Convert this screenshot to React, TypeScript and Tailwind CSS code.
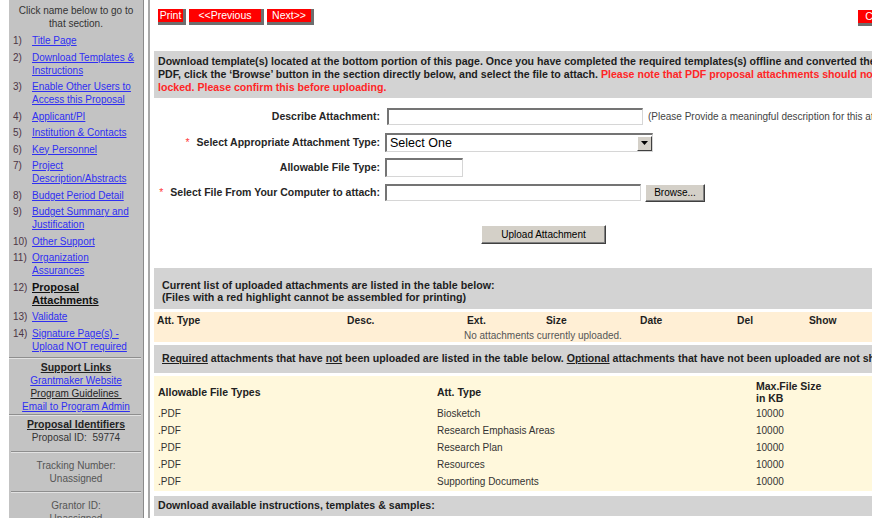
import React from 'react';

const navItems: { n: string; lines: string[]; active?: boolean }[] = [
  { n: '1)', lines: ['Title Page'] },
  { n: '2)', lines: ['Download Templates &', 'Instructions'] },
  { n: '3)', lines: ['Enable Other Users to', 'Access this Proposal'] },
  { n: '4)', lines: ['Applicant/PI'] },
  { n: '5)', lines: ['Institution & Contacts'] },
  { n: '6)', lines: ['Key Personnel'] },
  { n: '7)', lines: ['Project', 'Description/Abstracts'] },
  { n: '8)', lines: ['Budget Period Detail'] },
  { n: '9)', lines: ['Budget Summary and', 'Justification'] },
  { n: '10)', lines: ['Other Support'] },
  { n: '11)', lines: ['Organization', 'Assurances'] },
  { n: '12)', lines: ['Proposal', 'Attachments'], active: true },
  { n: '13)', lines: ['Validate'] },
  { n: '14)', lines: ['Signature Page(s) -', 'Upload NOT required'] },
];

const required = [
  { ext: '.PDF', type: 'Biosketch', size: '10000' },
  { ext: '.PDF', type: 'Research Emphasis Areas', size: '10000' },
  { ext: '.PDF', type: 'Research Plan', size: '10000' },
  { ext: '.PDF', type: 'Resources', size: '10000' },
  { ext: '.PDF', type: 'Supporting Documents', size: '10000' },
];

function RedButton({ children, className = '' }: { children: React.ReactNode; className?: string }) {
  return (
    <button
      className={`h-[16px] bg-[#ff0000] text-white text-[10.5px] leading-[13px] border-r-[3px] border-b-[3px] border-r-[#6e6e6e] border-b-[#6e6e6e] ${className}`}
    >
      {children}
    </button>
  );
}

function GrayButton({ children, className = '' }: { children: React.ReactNode; className?: string }) {
  return (
    <button
      className={`bg-[#d4d0c8] text-[10px] text-black border border-t-white border-l-white border-r-[#404040] border-b-[#404040] shadow-[inset_-1px_-1px_0_#808080] ${className}`}
    >
      {children}
    </button>
  );
}

const inset =
  'bg-white border-t-2 border-l-2 border-b border-r border-t-[#747474] border-l-[#747474] border-b-[#d6d6d6] border-r-[#d6d6d6]';

function Sep({ inner = false, className = '' }: { inner?: boolean; className?: string }) {
  return (
    <div
      className={`border-t border-b border-t-[#8e8e8e] border-b-[#e2e2e2] ${inner ? 'mx-[2px]' : 'mr-[2px]'} ${className}`}
    />
  );
}

function Sidebar() {
  return (
    <aside className="w-[135px] shrink-0 bg-[#c3c3c3] border-r border-[#8a8a8a] text-[10px] leading-[13px] text-[#333]">
      <div className="mt-[4px] text-center">
        Click name below to go to
        <br />
        that section.
      </div>

      <ul className="mt-[4px] flex flex-col gap-[3.5px] pl-[4px]">
        {navItems.map((item) => (
          <li key={item.n} className="flex">
            <span className="w-[19px] shrink-0 text-[#4d3545]">{item.n}</span>
            <a
              className={
                item.active
                  ? 'font-bold text-[11px] text-[#111] underline'
                  : 'text-[#2f2ff2] underline'
              }
            >
              {item.lines.map((l, i) => (
                <span key={i} className="block">
                  {l}
                </span>
              ))}
            </a>
          </li>
        ))}
      </ul>

      <Sep className="mt-[4px]" />
      <div className="mt-[2px] text-center">
        <div className="font-bold text-[10.5px] text-[#222] underline">Support Links</div>
        <a className="block text-[#2f2ff2] underline">Grantmaker Website</a>
        <a className="block text-[#222] underline">Program Guidelines&nbsp;</a>
        <a className="block text-[#2f2ff2] underline">Email to Program Admin</a>
      </div>

      <Sep className="mt-[1px]" />
      <div className="mt-[2px] text-center">
        <div className="font-bold text-[10.5px] text-[#222] underline">Proposal Identifiers</div>
        <div>Proposal ID:&nbsp; 59774</div>
        <Sep inner className="mt-[7px]" />
        <div className="mt-[6px] text-[#555]">
          Tracking Number:
          <br />
          Unassigned
        </div>
        <Sep inner className="mt-[6px]" />
        <div className="mt-[6px] text-[#555]">
          Grantor ID:
          <br />
          Unassigned
        </div>
      </div>
    </aside>
  );
}

export default function App() {
  return (
    <div className="h-[518px] w-[872px] overflow-hidden bg-white flex font-['Liberation_Sans',Arial,sans-serif]">
      <div className="w-[9px] shrink-0" />
      <Sidebar />
      <div className="w-[4px] shrink-0" />
      <div className="w-[2px] shrink-0 bg-[#a9a9a9]" />

      <main className="w-[1000px] shrink-0 pl-[4px]">
        {/* nav buttons */}
        <div className="mt-[9px] flex items-start gap-[3px] pl-[4px]">
          <RedButton className="w-[28px]">Print</RedButton>
          <RedButton className="w-[75px]">&lt;&lt;Previous</RedButton>
          <RedButton className="w-[47px]">Next&gt;&gt;</RedButton>
          <RedButton className="ml-[541px] mt-[1px] w-[50px]">Cancel</RedButton>
        </div>

        {/* instructions */}
        <div className="mt-[25px] bg-[#d3d3d3] py-[4px] pl-[4px] text-[10.6px] font-bold leading-[13px] text-[#1e1e1e] whitespace-nowrap">
          <div>
            Download template(s) located at the bottom portion of this page. Once you have completed the required
            templates(s) offline and converted them to
          </div>
          <div>
            PDF, click the ‘Browse’ button in the section directly below, and select the file to attach.{' '}
            <span className="text-[#ff2626]">
              Please note that PDF proposal attachments should not be password protected or
            </span>
          </div>
          <div className="text-[#ff2626]">locked. Please confirm this before uploading.</div>
        </div>

        {/* attachment form */}
        <div className="mt-[9px] text-[10.5px] font-bold text-[#262626]">
          <div className="flex items-center h-[19px]">
            <label className="w-[227px] text-right pr-[1px]">Describe Attachment:</label>
            <input className={`ml-[6px] h-[17px] w-[256px] ${inset}`} />
            <span className="ml-[5px] font-normal text-[10px] text-[#444] whitespace-nowrap">
              (Please Provide a meaningful description for this attachment)
            </span>
          </div>

          <div className="mt-[7px] flex items-center h-[19px]">
            <label className="w-[227px] text-right pr-[1px] whitespace-nowrap">
              <span className="text-[#ff3b3b] font-normal mr-[7px]">*</span>
              Select Appropriate Attachment Type:
            </label>
            <div className={`ml-[4px] h-[19px] w-[268px] flex items-center justify-between ${inset}`}>
              <span className="pl-[3px] text-[12.5px] font-normal text-black">Select One</span>
              <span className="h-[15px] w-[15px] bg-[#d4d0c8] border border-t-white border-l-white border-r-[#404040] border-b-[#404040] flex items-center justify-center">
                <svg width="7" height="4" viewBox="0 0 7 4">
                  <path d="M0 0h7L3.5 4z" fill="#000" />
                </svg>
              </span>
            </div>
          </div>

          <div className="mt-[6px] flex items-center h-[19px]">
            <label className="w-[227px] text-right pr-[1px]">Allowable File Type:</label>
            <input className={`ml-[4px] h-[19px] w-[78px] ${inset}`} />
          </div>

          <div className="mt-[6px] flex items-center h-[19px]">
            <label className="w-[227px] text-right pr-[1px] whitespace-nowrap">
              <span className="text-[#ff3b3b] font-normal mr-[7px]">*</span>
              Select File From Your Computer to attach:
            </label>
            <input className={`ml-[4px] h-[17px] w-[256px] ${inset}`} />
            <GrayButton className="ml-[4px] h-[18px] w-[60px] font-normal">Browse...</GrayButton>
          </div>

          <GrayButton className="mt-[23px] ml-[327px] h-[19px] w-[125px] font-normal">Upload Attachment</GrayButton>
        </div>

        <div className="mt-[24px] flex flex-col gap-[3px]">
          {/* uploaded list */}
          <div className="bg-[#d3d3d3] pt-[11px] pb-[6px] pl-[8px] text-[10.7px] font-bold leading-[12px] text-[#1e1e1e]">
            Current list of uploaded attachments are listed in the table below:
            <br />
            (Files with a red highlight cannot be assembled for printing)
          </div>

          <div className="bg-[#ffefd5] h-[30px] pt-[2px] pl-[3px] text-[10.3px] leading-[13px]">
            <div className="grid grid-cols-[190px_120px_79px_94px_97px_72px_1fr] font-bold text-[#1e1e1e]">
              <span>Att. Type</span>
              <span>Desc.</span>
              <span>Ext.</span>
              <span>Size</span>
              <span>Date</span>
              <span>Del</span>
              <span>Show</span>
            </div>
            <div className="ml-[307px] mt-[2px] text-[10px] text-[#555]">No attachments currently uploaded.</div>
          </div>

          {/* required list */}
          <div className="bg-[#d3d3d3] h-[28px] flex items-center pl-[8px] text-[10.6px] font-bold text-[#1e1e1e] whitespace-nowrap">
            <span>
              <span className="underline">Required</span> attachments that have <span className="underline">not</span>{' '}
              been uploaded are listed in the table below. <span className="underline">Optional</span> attachments that
              have not been uploaded are not shown.
            </span>
          </div>

          <div className="bg-[#fff8dc] pl-[4px] pt-[3px] pb-[1px] text-[10px] leading-[12px] text-[#333]">
            <div className="grid grid-cols-[279px_319px_1fr] h-[26px] items-center font-bold text-[10.5px] text-[#222]">
              <span>Allowable File Types</span>
              <span>Att. Type</span>
              <span>
                Max.File Size
                <br />
                in KB
              </span>
            </div>
            {required.map((r) => (
              <div key={r.type} className="grid grid-cols-[279px_319px_1fr] h-[17px] items-center">
                <span>{r.ext}</span>
                <span>{r.type}</span>
                <span>{r.size}</span>
              </div>
            ))}
          </div>

          <div className="mt-[2px] bg-[#d3d3d3] h-[20px] flex items-center pl-[4px] text-[10.6px] font-bold text-[#1e1e1e]">
            Download available instructions, templates &amp; samples:
          </div>
        </div>
      </main>
    </div>
  );
}
